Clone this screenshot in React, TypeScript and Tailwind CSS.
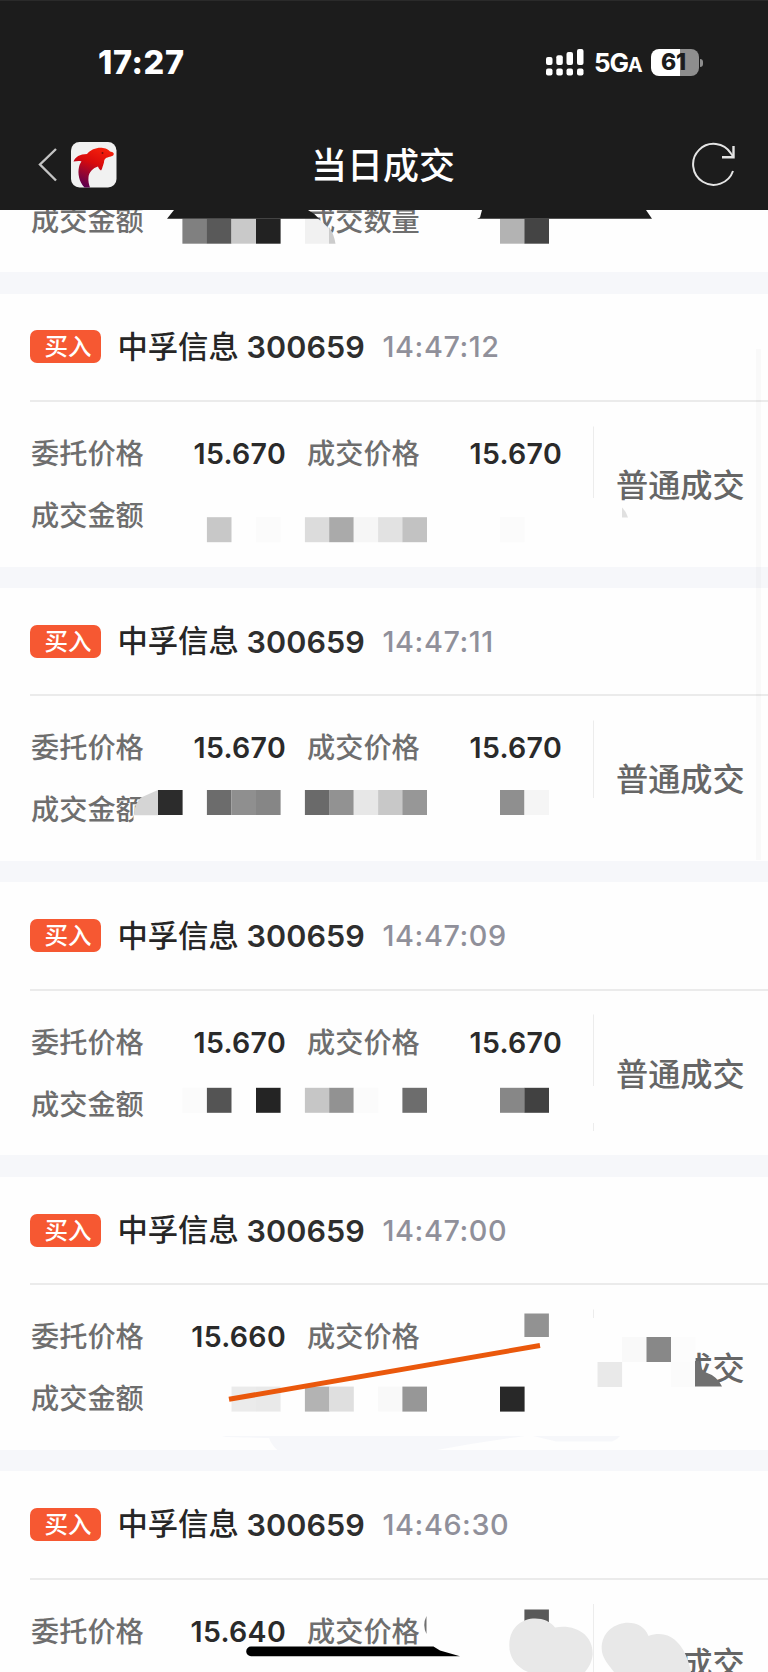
import React from "react";

type Block = [x: number, color: string, y?: number, w?: number, h?: number];

interface Trade {
  time: string;
  price: string;
  dealPrice?: string;
  // Son kartta tutar satırı ekranın dışında kalıyor
  hideAmount?: boolean;
  blockTop: number;
  blocks: Block[];
  art?: React.ReactNode;
}

// Tüm koordinatlar kartın sol üst köşesine göre
const trades: Trade[] = [
  {
    time: "14:47:12",
    price: "15.670",
    dealPrice: "15.670",
    blockTop: 223.2,
    blocks: [
      [206.9, "#c8c8c8"],
      [256, "#fbfbfb"],
      [304.9, "#dcdcdc"],
      [329.2, "#aaaaaa"],
      [353.7, "#f6f6f6"],
      [378.1, "#e2e2e2"],
      [402.4, "#c2c2c2"],
      [500, "#fbfbfb"],
    ],
    art: (
      <>
        <path d="M593.5 132.5V204" stroke="#ececec" />
        <path d="M622 213.5Q626 217 628 223.4H622Z" fill="#e0e0e0" />
      </>
    ),
  },
  {
    time: "14:47:11",
    price: "15.670",
    dealPrice: "15.670",
    blockTop: 202,
    blocks: [
      [158, "#2c2c2c"],
      [206.9, "#6c6c6c"],
      [231.5, "#8f8f8f"],
      [256, "#868686"],
      [304.9, "#6a6a6a"],
      [329.2, "#929292"],
      [353.7, "#e7e7e7"],
      [378.1, "#c8c8c8"],
      [402.4, "#979797"],
      [500, "#8f8f8f"],
      [524.4, "#f5f5f5"],
    ],
    art: (
      <>
        <path d="M593.5 132.5V210" stroke="#ececec" />
        <path d="M133.500 226H146V238H133.500Z" fill="#fefefe" />
        <path d="M158 202L141 209.5Q134 216 134 227.2H158Z" fill="#d5d5d5" />
      </>
    ),
  },
  {
    time: "14:47:09",
    price: "15.670",
    dealPrice: "15.670",
    blockTop: 205.8,
    blocks: [
      [182.4, "#fbfbfb"],
      [206.9, "#545454"],
      [256, "#242424"],
      [304.9, "#c6c6c6"],
      [329.2, "#929292"],
      [353.7, "#fbfbfb"],
      [402.4, "#6d6d6d"],
      [500, "#878787"],
      [524.4, "#414141"],
    ],
    art: <path d="M593.5 132.5V204M593.5 241V249" stroke="#ececec" />,
  },
  {
    time: "14:47:00",
    price: "15.660",
    blockTop: 209.6,
    blocks: [
      [231.5, "#ebebeb"],
      [256, "#e9e9e9"],
      [304.9, "#b3b3b3"],
      [329.2, "#dfdfdf"],
      [378.1, "#f9f9f9"],
      [402.4, "#979797"],
      [500, "#282828"],
      [524.4, "#929292", 136.5, 24.5, 23.5],
      [612, "#fefefe", 160, 83, 52],
      [622, "#f9f9f9", 160],
      [646.5, "#888888", 160],
      [671, "#fcfcfc", 160],
      [597.5, "#e9e9e9", 185],
      [671, "#fbfbfb", 185],
    ],
    art: (
      <>
        <path d="M593.5 132.5V141" stroke="#ececec" />
        <path d="M695 184H699Q701 194 706 195.500Q717 199 722 209.500H695Z" fill="#707070" />
        <path
          d="M222 259H525Q480 265 434 273.500H278Q272 269 269 261L226 260ZM533 259H620Q617 263 612 264.500H556Q547 262 533 259Z"
          fill="#f6f7fa"
        />
        <path d="M229 222.300L540 168.500" stroke="#ea580c" strokeWidth="5" />
      </>
    ),
  },
  {
    time: "14:46:30",
    price: "15.640",
    hideAmount: true,
    blockTop: 138.5,
    blocks: [[524.4, "#595959", 138.5, 24.5, 15]],
    art: (
      <>
        <path d="M593.5 133V202" stroke="#ececec" />
        <path
          d="M509.300 174C510 143 545 142 555 156.500C576 153 593 164 592.700 183C592 191 589 196 585 201H528C516 196 509 186 509.300 174Z"
          fill="#e8e8e8"
        />
        <path
          d="M601.700 178C601 149 641 143 648.500 165C670 157 686 174 691 201H614C607 192 602 186 601.700 178Z"
          fill="#e8e8e8"
        />
        <path d="M426.500 145Q422 154 426.500 163Z" fill="#707070" />
        <path d="M251 175.600H433.500L440 179.500L460 185.200H251A4.800 4.800 0 0 1 251 175.600Z" fill="#000" />
      </>
    ),
  },
];

function Mosaic({ blocks, top }: { blocks: Block[]; top: number }) {
  return (
    <>
      {blocks.map(([x, color, y = top, w = 24.6, h = 25], i) => (
        <rect key={i} x={x} y={y} width={w} height={h} fill={color} />
      ))}
    </>
  );
}

function StatusBar() {
  return (
    <div className="flex h-[110px] items-start pl-[98px] pr-[65px] pt-[41.500px]">
      <span className="text-[32.500px] font-extrabold leading-[40px] tracking-[0.600px]">17:27</span>
      <div className="ml-auto flex h-[40px] items-center">
        <svg width="38" height="27" viewBox="0 0 38 27" fill="#fff">
          <rect x="0" y="8" width="6.500" height="8" rx="2" />
          <rect x="10.300" y="6.300" width="6.500" height="9.700" rx="2" />
          <rect x="20.500" y="3" width="6.500" height="13" rx="2" />
          <rect x="31" y="0" width="6.500" height="16" rx="2" />
          <rect x="0" y="19.500" width="6.500" height="7" rx="2" />
          <rect x="10.300" y="19.500" width="6.500" height="7" rx="2" />
          <rect x="20.500" y="19.500" width="6.500" height="7" rx="2" />
          <rect x="31" y="19.500" width="6.500" height="7" rx="2" />
        </svg>
        <span className="ml-[10px] mt-[2px] w-[46.500px] whitespace-nowrap text-[26px] font-bold leading-[40px] tracking-[-1.200px]">
          5G<span className="text-[20px]">A</span>
        </span>
        <div className="ml-[10px] flex h-[26.500px] w-[48px] items-center justify-center rounded-[8px] bg-[linear-gradient(90deg,#fff_61%,#8e8e8e_61%)] pr-[2px] text-[23px] font-extrabold tracking-[-0.200px] text-[#1c1c1c]">
          61
        </div>
        <div className="ml-[1.500px] h-[8px] w-[3px] rounded-r-full bg-[#8e8e8e]" />
      </div>
    </div>
  );
}

function NavBar() {
  return (
    <div className="flex h-[100px] items-start justify-between pl-[38px] pr-[32px] pt-[31px]">
      <div className="flex w-[92px] items-center">
        <svg width="20" height="36" viewBox="0 0 20 36" fill="none" stroke="#c4c4c4" strokeWidth="2.400">
          <path d="M18 2L2 17.500L18 33.500" />
        </svg>
        <svg className="ml-[13px]" width="46" height="46" viewBox="0 0 46 46">
          <defs>
            <linearGradient id="dolphin" x1="0.700" y1="0" x2="0.300" y2="1">
              <stop offset="0" stopColor="#f5200c" />
              <stop offset="0.400" stopColor="#d80a0c" />
              <stop offset="0.650" stopColor="#a0062c" />
              <stop offset="1" stopColor="#5a0050" />
            </linearGradient>
          </defs>
          <rect width="45.500" height="45.500" rx="8.500" fill="#f1f1f1" />
          <path
            d="M2.500 19.500C4 15 9 12 16 12C20 7.500 26 5.200 32 6C36 6.500 38 8 39 9.500C42 10 43.500 11 42.500 13C41 15 37 14.500 34.500 16.500C32.500 18 33.500 20 32.500 22C31.500 25 30.500 28.500 30 28.500C28 27.500 27.500 25.500 27 24.500C22 26 18 30 17.500 35C17 39 18 43 19 45.500H13.500C8 40 6.500 31 8 25C8.500 22 10 20.500 10.500 19.500C7.500 18.500 5 19.500 2.500 19.500Z"
            fill="url(#dolphin)"
          />
          <circle cx="31.500" cy="11" r="1" fill="#7a1010" />
        </svg>
      </div>
      <h1 className="mt-[2px] text-[36px] font-medium leading-[44px]">当日成交</h1>
      <div className="flex w-[100px] justify-end">
        <svg width="46" height="46" viewBox="0 0 46 46" fill="none" stroke="#e4e4e4" strokeWidth="2">
          <path d="M43 29A20.500 20.500 0 1 1 41 11.500L43.500 15" />
          <path d="M43.500 4V15.200H32" strokeWidth="2.400" />
        </svg>
      </div>
    </div>
  );
}

function Label({ children }: { children: React.ReactNode }) {
  return (
    <span className="w-[114px] shrink-0 whitespace-nowrap text-[28.200px] font-medium leading-[40px] text-[#6e6e6e]">
      {children}
    </span>
  );
}

function Value({ children }: { children?: React.ReactNode }) {
  return (
    <span className="w-[141px] shrink-0 whitespace-nowrap text-right text-[28.500px] font-semibold leading-[40px] tracking-[0.300px] text-[#2a2a2a]">
      {children}
    </span>
  );
}

function TradeCard({ trade }: { trade: Trade }) {
  return (
    <section className="relative mb-[21.400px] h-[273px] shrink-0 bg-[#fefefe]">
      <div className="ml-[30px] flex h-[108.500px] items-center border-b-2 border-[#ebebeb]">
        <span className="h-[33px] w-[70.500px] rounded-[7px] bg-[#f65832] pl-[14.500px] text-[23.500px] font-medium leading-[33px] text-white">
          买入
        </span>
        <span className="ml-[17px] w-[121px] whitespace-nowrap text-[30.300px] font-medium leading-[40px] text-[#262626]">
          中孚信息
        </span>
        <span className="ml-[8px] mt-px w-[118px] text-[30.500px] font-semibold leading-[40px] tracking-[0.100px] text-[#2e2e2e]">
          300659
        </span>
        <span className="ml-[18px] mt-px text-[28.800px] font-medium leading-[40px] tracking-[0.600px] text-[#90909a]">
          {trade.time}
        </span>
      </div>
      <div className="flex pl-[31px]">
        <div className="pt-[32px]">
          <div className="flex h-[62px]">
            <Label>委托价格</Label>
            <Value>{trade.price}</Value>
            <span className="w-[21px]" />
            <Label>成交价格</Label>
            <Value>{trade.dealPrice}</Value>
          </div>
          {!trade.hideAmount && <Label>成交金额</Label>}
        </div>
        <span className="ml-[54px] mt-[62px] whitespace-nowrap text-[32.200px] font-medium leading-[44px] text-[#666666]">
          普通成交
        </span>
      </div>
      {/* Gizlenmiş rakamlar ve çizimler */}
      <svg className="absolute left-0 top-0" width="768" height="274" viewBox="0 0 768 274" fill="none">
        <Mosaic blocks={trade.blocks} top={trade.blockTop} />
        {trade.art}
      </svg>
    </section>
  );
}

const headBlocks: Block[] = [
  [182.4, "#808080"],
  [206.9, "#595959"],
  [231.5, "#c9c9c9"],
  [256, "#222222"],
  [500, "#b3b3b3"],
  [524.4, "#444444"],
];

export default function App() {
  return (
    <main className="relative flex h-[1672px] w-[768px] flex-col overflow-hidden bg-[#f6f7fa] font-['Inter','Noto_Sans_CJK_SC',sans-serif]">
      <header className="h-[210px] shrink-0 border-t border-[#2a2a2a] bg-[#1c1c1c] text-white">
        <StatusBar />
        <NavBar />
      </header>

      {/* Üst çubuğun altına kayan satır */}
      <section className="relative mb-[21.600px] h-[62px] shrink-0 overflow-hidden bg-[#fefefe]">
        <div className="-mt-[9px] flex pl-[31px]">
          <Label>成交金额</Label>
          <Value />
          <span className="w-[21px]" />
          <Label>成交数量</Label>
        </div>
        <svg className="absolute left-0 top-0" width="768" height="62" viewBox="0 0 768 62">
          <Mosaic blocks={headBlocks} top={8.7} />
          <path d="M305 8H317Q324 13 329 18.500V33.700H305Z" fill="#f1f1f1" />
          <path d="M329 17Q334 24 335.500 33.700H329Z" fill="#cccccc" />
          <path d="M167 8.700L174 0H308Q314 3 319 8.700ZM477 8.700L480 7.500L482 0H646L652 8.700Z" fill="#1c1c1c" />
        </svg>
      </section>

      {trades.map((trade) => (
        <TradeCard key={trade.time} trade={trade} />
      ))}

      {/* Kaydırma çubuğu */}
      <div className="absolute left-[756px] top-[349px] h-[511px] w-[5px] bg-black/[0.02]" />
    </main>
  );
}
